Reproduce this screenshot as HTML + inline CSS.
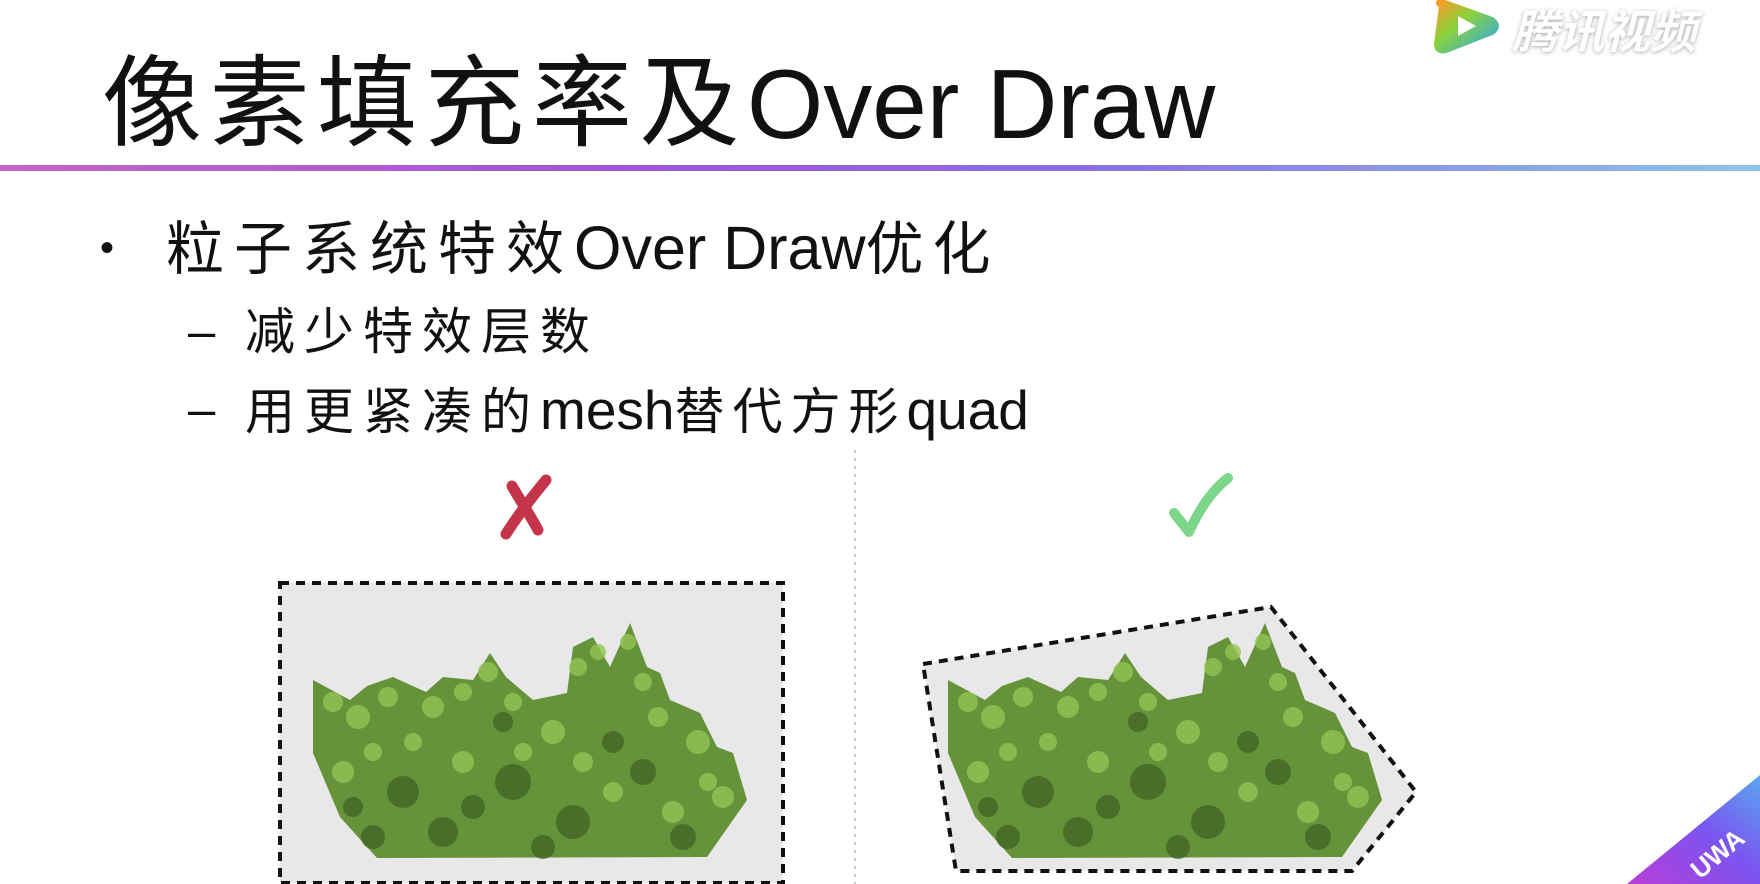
<!DOCTYPE html>
<html><head><meta charset="utf-8"><style>
html,body{margin:0;padding:0;background:#fff;}
body{width:1760px;height:884px;overflow:hidden;position:relative;font-family:"Liberation Sans","Noto Sans CJK SC",sans-serif;color:#111;}
.t{position:absolute;white-space:nowrap;}
</style></head><body>
<svg width="1760" height="884" style="position:absolute;left:0;top:0">
<defs>
<linearGradient id="bar" x1="0" x2="1" y1="0" y2="0">
<stop offset="0" stop-color="#c564c8"/><stop offset="0.35" stop-color="#a055d8"/><stop offset="0.6" stop-color="#8a6ae6"/><stop offset="1" stop-color="#8cc4e8"/></linearGradient>
<linearGradient id="badge" x1="0" y1="1" x2="1" y2="0">
<stop offset="0" stop-color="#b83cd8"/><stop offset="0.55" stop-color="#7a55f0"/><stop offset="1" stop-color="#5aa8f0"/></linearGradient>
<linearGradient id="logo" x1="0" y1="0" x2="1" y2="1">
<stop offset="0" stop-color="#ff9a2a"/><stop offset="0.4" stop-color="#8ad23a"/><stop offset="1" stop-color="#2fa8f0"/></linearGradient>
<g id="bush">
<path d="M0,58 L37,78 L54,64 L80,55 L113,70 L130,55 L160,58 L177,31 L193,55 L220,78 L254,71 L260,25 L280,15 L297,45 L317,1 L334,45 L347,51 L357,78 L387,91 L404,125 L420,131 L434,178 L394,235 L64,236 L27,195 L0,131 Z" fill="#66923a"/>
<g fill="#93c455" opacity="0.8">
<circle cx="20" cy="80" r="10"/><circle cx="45" cy="95" r="12"/><circle cx="75" cy="75" r="10"/><circle cx="120" cy="85" r="11"/><circle cx="150" cy="70" r="9"/><circle cx="175" cy="50" r="10"/><circle cx="200" cy="80" r="9"/><circle cx="265" cy="45" r="9"/><circle cx="285" cy="30" r="8"/><circle cx="315" cy="20" r="8"/><circle cx="330" cy="60" r="9"/><circle cx="385" cy="120" r="12"/><circle cx="410" cy="175" r="11"/><circle cx="240" cy="110" r="12"/><circle cx="345" cy="95" r="10"/><circle cx="30" cy="150" r="11"/><circle cx="150" cy="140" r="11"/><circle cx="300" cy="170" r="10"/><circle cx="360" cy="190" r="11"/><circle cx="100" cy="120" r="9"/><circle cx="210" cy="130" r="9"/><circle cx="270" cy="140" r="10"/><circle cx="60" cy="130" r="9"/><circle cx="395" cy="160" r="9"/>
</g>
<g fill="#3f6424" opacity="0.75">
<circle cx="90" cy="170" r="16"/><circle cx="200" cy="160" r="18"/><circle cx="260" cy="200" r="17"/><circle cx="130" cy="210" r="15"/><circle cx="330" cy="150" r="13"/><circle cx="60" cy="215" r="12"/><circle cx="370" cy="215" r="13"/><circle cx="190" cy="100" r="10"/><circle cx="160" cy="185" r="12"/><circle cx="300" cy="120" r="11"/><circle cx="40" cy="185" r="10"/><circle cx="230" cy="225" r="12"/>
</g>
</g>
</defs>
<rect x="0" y="165" width="1760" height="6" fill="url(#bar)"/>
<line x1="855" y1="450" x2="855" y2="884" stroke="#c8c8c8" stroke-width="2" stroke-dasharray="3,5"/>
<rect x="280" y="583" width="503" height="300" fill="#e8e8e8" stroke="#111" stroke-width="4" stroke-dasharray="9,7"/>
<polygon points="923,664 1271,607 1416,792 1352,871 956,871" fill="#e8e8e8" stroke="#111" stroke-width="4" stroke-dasharray="9,7"/>
<use href="#bush" x="313" y="622"/>
<use href="#bush" x="948" y="622"/>
<path d="M512,486 C520,500 530,515 538,530 M546,480 C532,497 518,515 506,534" stroke="#c4344a" stroke-width="11" fill="none" stroke-linecap="round"/>
<path d="M1174,513 L1189,532 C1198,512 1210,492 1228,478" stroke="#7dd68a" stroke-width="10" fill="none" stroke-linecap="round" stroke-linejoin="round"/>
<polygon points="1627,884 1760,775 1760,884" fill="url(#badge)"/>
<text x="1700" y="880" fill="#fff" font-size="26" font-family="Liberation Sans" font-weight="bold" transform="rotate(-40 1700 880)">UWA</text>
<path d="M1442,6 Q1436,2 1442,2 L1492,20 Q1500,26 1492,32 L1446,50 Q1437,52 1437,44 Z" fill="url(#logo)" stroke="url(#logo)" stroke-width="6" stroke-linejoin="round"/>
<path d="M1458,16 L1476,26 L1458,36 Z" fill="#fff"/>
</svg>
<div class="t" style="left:1512px;top:-4px;font-size:46px;color:#fff;font-style:italic;font-weight:bold;text-shadow:0 1px 4px #aaa;">腾讯视频</div>
<div class="t" style="left:102px;top:44px;font-size:100px;line-height:120px;"><span style="letter-spacing:7.5px">像素填充率及</span><span style="font-size:98px">Over Draw</span></div>
<div class="t" style="left:100px;top:218px;font-size:40px;line-height:60px;">•</div>
<div class="t" style="left:166px;top:214px;font-size:58px;line-height:68px;"><span style="letter-spacing:10px">粒子系统特效</span><span style="font-size:61px">Over Draw</span><span style="letter-spacing:9px">优化</span></div>
<div class="t" style="left:188px;top:302px;font-size:49px;line-height:60px;">–</div>
<div class="t" style="left:245px;top:302px;font-size:50px;line-height:60px;letter-spacing:9px;">减少特效层数</div>
<div class="t" style="left:188px;top:380px;font-size:49px;line-height:60px;">–</div>
<div class="t" style="left:245px;top:380px;font-size:50px;line-height:60px;"><span style="letter-spacing:9px">用更紧凑的</span><span style="font-size:55px">mesh</span><span style="letter-spacing:8px">替代方形</span><span style="font-size:55px">quad</span></div>
</body></html>
